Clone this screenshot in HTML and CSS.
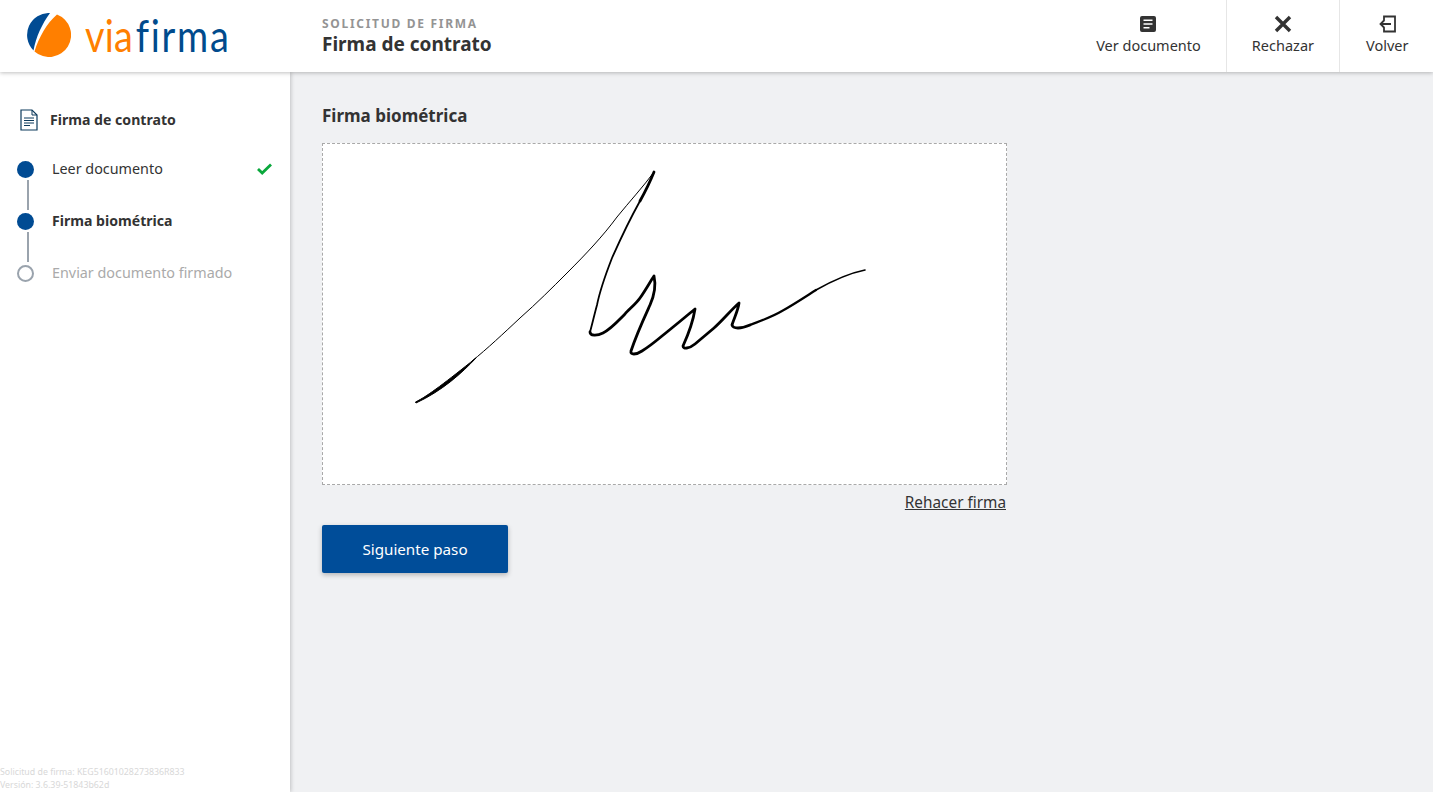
FILE: index.html
```html
<!DOCTYPE html>
<html lang="es">
<head>
<meta charset="utf-8">
<title>Firma de contrato</title>
<link rel="stylesheet" href="styles.css">
</head>
<body>
<header class="header">
  <div class="logo">
    <svg class="logo-mark" viewBox="0 0 44 44" width="44" height="44">
      <path fill="#004b93" d="M23 0A22 22 0 0 0 6.500 37.500C9 24 15 11 23 0Z"/>
      <path fill="#ff7f00" d="M30 1.500C20 10 12 24 7.500 38.500A22 22 0 1 0 30 1.500Z"/>
    </svg>
    <span class="logo-text"><span class="via">via</span><span class="firma">firma</span></span>
  </div>
  <div class="titles">
    <div class="eyebrow">SOLICITUD DE FIRMA</div>
    <div class="doc-title">Firma de contrato</div>
  </div>
  <nav class="actions">
    <a class="action">
      <svg viewBox="0 0 18 18" width="18" height="18"><path fill="#333" d="M3 1h12a2 2 0 0 1 2 2v12a2 2 0 0 1-2 2H3a2 2 0 0 1-2-2V3a2 2 0 0 1 2-2Zm1.500 3.500v1.600h9V4.500Zm0 3.700v1.600h9V8.200Zm0 3.700v1.600h6v-1.600Z" fill-rule="evenodd"/></svg>
      <span>Ver documento</span>
    </a>
    <a class="action reject">
      <svg viewBox="0 0 18 18" width="18" height="18"><path stroke="#333" stroke-width="3.400" d="M2 2l14 14M16 2L2 16"/></svg>
      <span>Rechazar</span>
    </a>
    <a class="action back">
      <svg viewBox="0 0 18 18" width="18" height="18"><path fill="none" stroke="#333" stroke-width="1.800" d="M6 5V1.500h11v15H6V13M13 9H2.500M6.500 5L2.500 9l4 4"/></svg>
      <span>Volver</span>
    </a>
  </nav>
</header>
<div class="body">
  <aside class="sidebar">
    <div class="side-top">
      <div class="side-title">
        <svg viewBox="0 0 18 22" width="18" height="22"><path fill="#fff" stroke="#0d3a5c" stroke-width="1.200" d="M1 1h11l5 5v15H1Z"/><path fill="none" stroke="#0d3a5c" stroke-width="1" d="M12 1v5h5"/><path stroke="#0d3a5c" stroke-width="1" d="M4 9h10M4 11.500h10M4 14h10M4 16.500h6"/></svg>
        <span>Firma de contrato</span>
      </div>
      <ol class="steps">
        <li class="step done"><span class="dot"></span><span class="label">Leer documento</span>
          <svg class="check" viewBox="0 0 15 12" width="15" height="12"><path fill="none" stroke="#0aa83c" stroke-width="2.800" d="M1 6l4.200 4L14 1.500"/></svg>
        </li>
        <li class="step current"><span class="dot"></span><span class="label">Firma biométrica</span></li>
        <li class="step pending"><span class="dot"></span><span class="label">Enviar documento firmado</span></li>
      </ol>
    </div>
    <div class="side-foot">Solicitud de firma: KEG51601028273836R833<br>Versión: 3.6.39-51843b62d</div>
  </aside>
  <main class="main">
    <h2 class="section-title">Firma biométrica</h2>
    <div class="sign-col">
      <div class="sign-box">
        <svg class="signature" viewBox="322 143 685 342" width="685" height="342">
          <path fill="#000" stroke="#000" stroke-width="1" stroke-linejoin="round" d="M415.500 402C428 396 447 381 476 358C462 373 442 391 416 403Z"/>
          <g fill="none" stroke="#000" stroke-linecap="round" stroke-linejoin="round">
            <path stroke-width="1" d="M472 361C487 349 504 333 520 318C537 303 552 288 567 273C586 254 603 236 617 217C630 201 643 187 654 172"/>
            <path stroke-width="2.800" d="M654 172C650 182 645 192 640 201"/>
            <path stroke-width="1.800" d="M640 201C630 219 620 240 612 258C605 276 600 290 597 305C594 316 592 325 590 332"/>
            <path stroke-width="2.800" d="M590 332C590 336 597 336 603 333C611 329 617 322 625 314C628 310 636 304 640 298C645 291 650 282 654 276C656 285 654 296 650 305C645 316 637 333 631 351C630 355 636 355 642 351C650 346 656 341 662 336C672 328 684 318 695 309C693 322 688 335 683 346C683 349 689 349 695 344C701 339 708 333 714 328C722 321 731 310 739 303C738 311 734 318 732 325C733 329 741 329 750 325"/>
            <path stroke-width="2.200" d="M750 325C760 321 772 317 782 311C793 305 805 297 816 290"/>
            <path stroke-width="1.600" d="M816 290C832 281 850 273 865 270"/>
          </g>
        </svg>
      </div>
      <div class="redo-row"><a class="redo">Rehacer firma</a></div>
    </div>
    <button class="next" type="button">Siguiente paso</button>
  </main>
</div>
</body>
</html>
```
FILE: styles.css
```css
* { box-sizing: border-box; }
html, body { height: 100%; margin: 0; }
body {
  font-family: "Noto Sans", "Open Sans", sans-serif;
  color: #333;
  background: #f0f1f3;
  display: flex;
  flex-direction: column;
  overflow: hidden;
}
.header {
  height: 72px;
  flex: none;
  background: #fff;
  display: flex;
  align-items: stretch;
  box-shadow: 0 1px 4px rgba(0, 0, 0, .25);
  position: relative;
  z-index: 2;
}
.logo {
  width: 322px;
  flex: none;
  display: flex;
  align-items: center;
  padding: 0 0 2px 27px;
  gap: 14px;
}
.logo-mark { flex: none; }
.logo-text {
  display: inline-block;
  white-space: nowrap;
  font-family: "Lato", sans-serif;
  font-size: 44px;
  line-height: 44px;
  letter-spacing: .3px;
  transform: scaleX(.86);
  transform-origin: left center;
}
.via { color: #ff7f00; }
.firma { color: #004b8d; margin-left: 3px; letter-spacing: 2px; }
.titles {
  flex: 1;
  display: flex;
  flex-direction: column;
  padding-top: 16px;
}
.eyebrow {
  font-size: 12px;
  line-height: 15px;
  font-weight: 700;
  letter-spacing: 1.700px;
  color: #949494;
}
.doc-title {
  font-size: 19px;
  line-height: 26px;
  font-weight: 700;
  color: #333;
}
.actions { display: flex; align-items: stretch; }
.action {
  display: flex;
  flex-direction: column;
  align-items: center;
  padding: 15px 25px 0;
  font-size: 14.500px;
  line-height: 20px;
  color: #333;
  gap: 2px;
}
.action + .action { border-left: 1px solid #e6e6e6; }
.action.reject { padding-right: 24.500px; }
.action.back { padding-left: 26.500px; padding-right: 24.500px; }
.body { flex: 1; display: flex; min-height: 0; }
.sidebar {
  width: 290px;
  flex: none;
  background: #fff;
  display: flex;
  flex-direction: column;
  justify-content: space-between;
  box-shadow: 1px 0 4px rgba(0, 0, 0, .2);
  position: relative;
  z-index: 1;
}
.side-top { padding: 37px 18px 0 17px; }
.side-title {
  display: flex;
  align-items: center;
  gap: 12px;
  padding-left: 3px;
  font-size: 14.100px;
  line-height: 20px;
  font-weight: 700;
  height: 22px;
}
.steps { list-style: none; margin: 12px 0 0; padding: 0; }
.step {
  height: 52px;
  display: flex;
  align-items: center;
  position: relative;
  font-size: 14.350px;
}
.dot {
  width: 17px;
  height: 17px;
  border-radius: 50%;
  flex: none;
  background: #004b93;
  margin-right: 18px;
}
.step:not(:last-child)::after {
  content: "";
  position: absolute;
  left: 10px;
  top: 37px;
  width: 2px;
  height: 30px;
  background: #9aa3ad;
}
.label { flex: 1; margin-top: -2px; }
.check { flex: none; }
.current .label { font-weight: 700; font-size: 14.100px; }
.pending .dot { background: #fff; border: 2.500px solid #9aa3ad; }
.pending .label { color: #aaa; }
.side-foot {
  font-size: 8.800px;
  line-height: 13px;
  color: #d8d8d8;
}
.main { flex: 1; padding: 32px 0 0 32px; min-width: 0; }
.section-title {
  margin: 0 0 15px;
  font-size: 17px;
  line-height: 24px;
  font-weight: 700;
}
.sign-col { width: 685px; }
.sign-box {
  height: 342px;
  background: #fff;
  outline: 1px dashed #a9a9a9;
  outline-offset: -1px;
  overflow: hidden;
}
.signature { display: block; }
.redo-row { display: flex; justify-content: flex-end; padding: 7px 1px 0 0; height: 40px; }
.redo {
  font-size: 15.350px;
  line-height: 21px;
  text-decoration: underline;
  color: #333;
}
.next {
  display: block;
  width: 186px;
  height: 48px;
  border: 0;
  border-radius: 2px;
  background: #004d99;
  color: #fff;
  font: 15.200px "Noto Sans", sans-serif;
  box-shadow: 0 2px 5px rgba(0, 0, 0, .25);
}
```
